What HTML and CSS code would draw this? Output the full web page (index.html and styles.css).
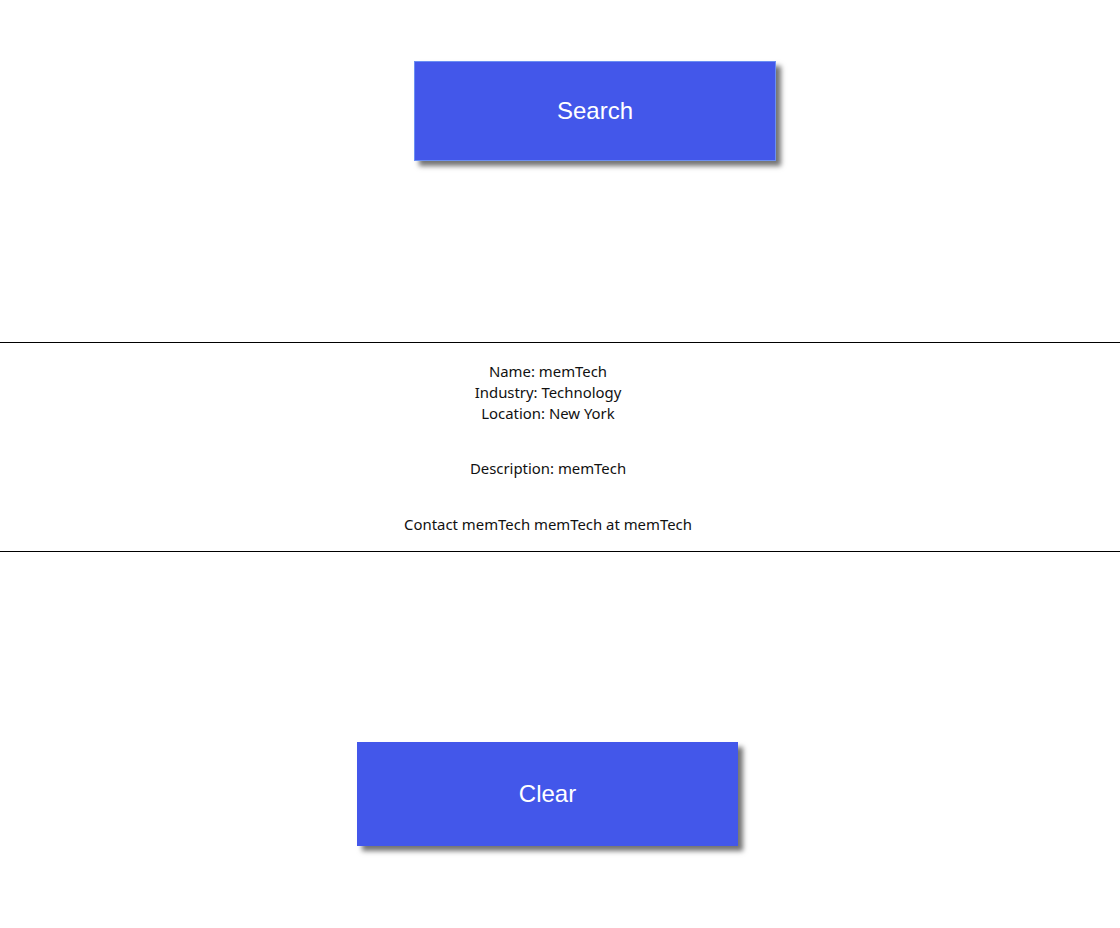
FILE: index.html
```html
<!DOCTYPE html>
<html>
<head>
<meta charset="utf-8">
<link rel="stylesheet" href="styles.css">
</head>
<body>
<section class="top">
  <button class="btn btn-search">Search</button>
</section>
<hr class="rule">
<section class="info">
  <div class="line">Name: memTech</div>
  <div class="line">Industry: Technology</div>
  <div class="line">Location: New York</div>
  <p class="para">Description: memTech</p>
  <p class="para para-contact">Contact memTech memTech at memTech</p>
</section>
<hr class="rule">
<section class="bottom">
  <button class="btn btn-clear">Clear</button>
</section>
</body>
</html>
```
FILE: styles.css
```css
html, body {
  margin: 0;
  padding: 0;
  background: #fff;
}
body {
  font-family: "Noto Sans", "Open Sans", sans-serif;
  font-size: 14.9px;
  color: #111;
}
.top {
  height: 342px;
  box-sizing: border-box;
  padding-top: 61px;
  padding-left: 414px;
}
.btn {
  display: block;
  background: #4357ea;
  color: #fff;
  font-family: "Liberation Sans", Arial, sans-serif;
  font-size: 24px;
  border: none;
  box-shadow: 5px 5px 5px rgba(0, 0, 0, 0.55);
  cursor: pointer;
}
.btn-search {
  width: 362px;
  height: 100px;
  border: 1px solid #6b8ff3;
}
.btn-clear {
  width: 381px;
  height: 104px;
}
.rule {
  margin: 0;
  border: none;
  border-top: 1px solid #000;
  height: 0;
}
.info {
  text-align: center;
  padding: 18px 24px 16px 0;
}
.line {
  line-height: 21px;
}
.para {
  margin: 34px 0 0;
  line-height: 21px;
}
.para-contact {
  margin-top: 35px;
}
.bottom {
  padding-top: 190px;
  padding-left: 357px;
  padding-bottom: 40px;
}
```
